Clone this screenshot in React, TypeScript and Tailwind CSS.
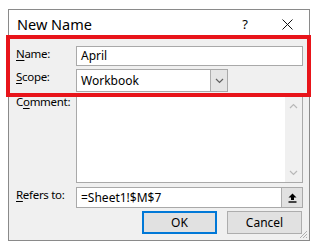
import React from "react";

const font = { fontFamily: '"Noto Sans", "Open Sans", sans-serif' };

const Label = ({ pre, key1, post }: { pre: string; key1: string; post: string }) => (
  <span className="text-[11.5px] tracking-[-0.3px] text-black">
    {pre}
    <span className="underline underline-offset-2">{key1}</span>
    {post}
  </span>
);

const Chevron = ({ up = false, className = "" }: { up?: boolean; className?: string }) => (
  <svg width="9" height="6" viewBox="0 0 9 6" className={className}>
    <path
      d={up ? "M1 5 L4.5 1.5 L8 5" : "M1 1 L4.5 4.5 L8 1"}
      fill="none"
      stroke="currentColor"
      strokeWidth="1.2"
    />
  </svg>
);

const NewNameDialog = () => {
  return (
    <div className="relative w-[302px] h-[232px] border border-[#8a8a8a] bg-[#f0f0f0] flex flex-col">
      {/* title bar */}
      <div className="h-[27px] bg-white flex items-center pl-[8px] pr-[16px] shrink-0">
        <span className="text-[14.5px] text-black flex-1 pt-[2px]">New Name</span>
        <span className="text-[13px] text-black mr-[34px] pt-[2px]">?</span>
        <svg width="11" height="11" viewBox="0 0 11 11" className="mt-[2px]">
          <path d="M0.5 0.5 L10.5 10.5 M10.5 0.5 L0.5 10.5" stroke="#111" strokeWidth="1" />
        </svg>
      </div>

      <div className="flex flex-col pl-[7px] pr-[6px] pt-[9px]">
        {/* Name */}
        <div className="flex items-start h-[20px]">
          <div className="w-[60px] text-[12px] leading-[14px] pt-[1px]">
            <Label pre="" key1="N" post="ame:" />
          </div>
          <div className="w-[227px] h-[20px] bg-white border border-[#a9a9a9] flex items-center pl-[4px] text-[12px]">
            April
          </div>
        </div>

        {/* Scope */}
        <div className="flex items-start mt-[3px] h-[23px]">
          <div className="w-[60px] text-[12px] leading-[14px] pt-[1px]">
            <Label pre="" key1="S" post="cope:" />
          </div>
          <div className="w-[152px] h-[23px] bg-white border border-[#a9a9a9] flex items-center">
            <span className="flex-1 pl-[4px] text-[12px]">Workbook</span>
            <div className="w-[17px] h-full bg-[#e5e5e5] border-l border-[#adadad] flex items-center justify-center text-[#606060]">
              <Chevron />
            </div>
          </div>
        </div>

        {/* Comment */}
        <div className="flex items-start mt-[4px] h-[87px]">
          <div className="w-[60px] text-[12px] leading-[14px] -mt-[1px]">
            <Label pre="C" key1="o" post="mment:" />
          </div>
          <div className="w-[227px] h-[87px] bg-white border border-[#a9a9a9] flex">
            <div className="flex-1" />
            <div className="w-[17px] bg-[#f0f0f0] flex flex-col items-center justify-between py-[6px] text-[#b8b8b8]">
              <Chevron up />
              <Chevron />
            </div>
          </div>
        </div>

        {/* Refers to */}
        <div className="flex items-start mt-[4px] h-[21px]">
          <div className="w-[60px] text-[12px] leading-[14px] pt-[1px]">
            <Label pre="" key1="R" post="efers to:" />
          </div>
          <div className="w-[227px] h-[21px] bg-white border border-[#a9a9a9] flex items-center">
            <span className="flex-1 pl-[4px] text-[12px]">=Sheet1!$M$7</span>
            <div className="w-[21px] h-[19px] bg-[#e1e1e1] border-l border-[#adadad] flex items-center justify-center">
              <svg width="9" height="10" viewBox="0 0 9 10">
                <path d="M4.5 0.5 L8.5 4.5 L6 4.5 L6 7 L3 7 L3 4.5 L0.5 4.5 Z" fill="#000" />
                <rect x="0.5" y="8.3" width="8" height="1.4" fill="#000" />
              </svg>
            </div>
          </div>
        </div>

        {/* buttons */}
        <div className="flex justify-end gap-[10px] mt-[3px] pr-[1px]">
          <button className="w-[75px] h-[23px] bg-[#e1e1e1] border-2 border-[#0078d7] text-[12px] leading-none">
            OK
          </button>
          <button className="w-[75px] h-[23px] bg-[#e1e1e1] border border-[#adadad] text-[12px] leading-none">
            Cancel
          </button>
        </div>
      </div>

      {/* resize grip */}
      <svg width="9" height="9" viewBox="0 0 9 9" className="absolute right-[1px] bottom-[1px]">
        <path d="M8 1 L1 8 M8 4 L4 8 M8 7 L7 8" stroke="#b0b0b0" strokeWidth="1" />
      </svg>
    </div>
  );
};

export default function App() {
  return (
    <div className="w-[324px] h-[251px] bg-white pl-[8px] pt-[9px] relative text-black" style={font}>
      <NewNameDialog />
      {/* red highlight around Name and Scope */}
      <div className="absolute left-[6px] top-[35px] w-[305px] h-[62px] border-[4px] border-[#e8141a] pointer-events-none" />
    </div>
  );
}
